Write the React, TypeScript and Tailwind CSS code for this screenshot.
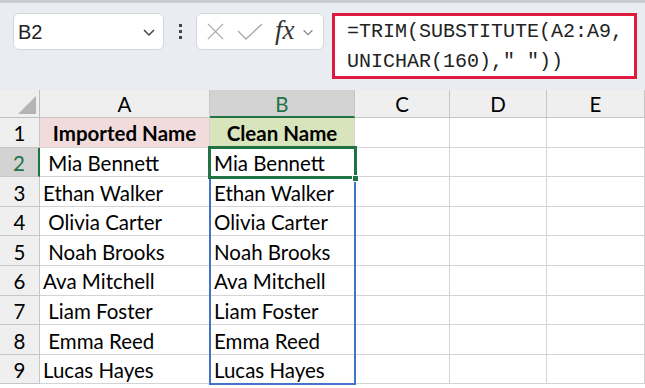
import React from "react";

const rows = [
    { a: "\u00A0Mia Bennett", b: "Mia Bennett" },
    { a: "Ethan Walker", b: "Ethan Walker" },
    { a: "\u00A0Olivia Carter", b: "Olivia Carter" },
    { a: "\u00A0Noah Brooks", b: "Noah Brooks" },
    { a: "Ava Mitchell", b: "Ava Mitchell" },
    { a: "\u00A0Liam Foster", b: "Liam Foster" },
    { a: "\u00A0Emma Reed", b: "Emma Reed" },
    { a: "Lucas Hayes", b: "Lucas Hayes" },
];

const Chevron = ({ className }: { className?: string }) => (
    <svg viewBox="0 0 16 16" className={className} fill="none" stroke="currentColor" strokeWidth="1.5">
        <path d="M3 6l5 5 5-5" />
    </svg>
);

const App = () => {
    return (
        <div className="w-[645px] h-[388px] overflow-hidden bg-white" style={{ fontFamily: "Lato, 'Open Sans', sans-serif" }}>
            {/* Toolbar with name box and formula bar */}
            <div className="h-[90px] bg-[#e9edf1] border-t-[3px] border-[#c9cdd1] flex items-start pt-[10px] pl-[13px]">
                <div className="w-[151px] h-[37px] bg-white border border-[#d3d6da] rounded-md flex items-center pl-[4px] pr-[6px] text-[20px] text-[#222]" style={{ fontFamily: "'Liberation Sans', Arial, sans-serif" }}>
                    <span className="flex-1">B2</span>
                    <Chevron className="w-[16px] h-[16px] text-[#444]" />
                </div>
                <div className="w-[32px] h-[37px] flex flex-col items-center justify-center gap-[3px]">
                    <div className="w-[3px] h-[3px] bg-[#444]" />
                    <div className="w-[3px] h-[3px] bg-[#444]" />
                    <div className="w-[3px] h-[3px] bg-[#444]" />
                </div>
                <div className="w-[128px] h-[37px] bg-white border border-[#d3d6da] rounded-md flex items-center pl-[9px] pr-[4px]">
                    <svg viewBox="0 0 20 20" className="w-[19px] h-[19px] text-[#a8a8a8]" fill="none" stroke="currentColor" strokeWidth="1.3">
                        <path d="M2 2l16 16M18 2L2 18" />
                    </svg>
                    <svg viewBox="0 0 26 18" className="w-[26px] h-[18px] ml-[12px] text-[#a8a8a8]" fill="none" stroke="currentColor" strokeWidth="1.3">
                        <path d="M1 8l8 8L25 1" />
                    </svg>
                    <span className="ml-[12px] text-[27px] italic text-[#333] leading-none -mt-[3px]" style={{ fontFamily: "'Liberation Serif', 'Times New Roman', serif" }}>fx</span>
                    <Chevron className="ml-[6px] w-[14px] h-[14px] text-[#8a8a8a]" />
                </div>
                <div className="ml-[8px] w-[305px] h-[66px] bg-white border-[3px] border-[#e0193f] pl-[12px] pt-[1px] text-[20px] leading-[30px] text-[#222]" style={{ fontFamily: "'Liberation Mono', 'DejaVu Sans Mono', monospace" }}>
                    <div>=TRIM(SUBSTITUTE(A2:A9,</div>
                    <div>UNICHAR(160)," "))</div>
                </div>
            </div>

            {/* Worksheet grid */}
            <div className="relative grid grid-cols-[40px_170px_145px_95px_97px_98px] text-[20.5px] text-black">
                {/* Column headers */}
                <div className="h-[28px] bg-[#efefef] border-r border-b border-[#bfbfbf] relative">
                    <div className="absolute right-[3px] bottom-[3px] w-0 h-0 border-l-[18px] border-l-transparent border-b-[18px] border-b-[#b4b4b4]" />
                </div>
                <div className="h-[28px] bg-[#efefef] border-r border-b border-[#c6c6c6] flex items-center justify-center pt-[2px]">A</div>
                <div className="h-[28px] bg-[#d3d3d3] border-r border-b-2 border-b-[#217346] border-r-[#c6c6c6] flex items-center justify-center text-[#217346] pt-[2px]">B</div>
                <div className="h-[28px] bg-[#efefef] border-r border-b border-[#c6c6c6] flex items-center justify-center pt-[2px]">C</div>
                <div className="h-[28px] bg-[#efefef] border-r border-b border-[#c6c6c6] flex items-center justify-center pt-[2px]">D</div>
                <div className="h-[28px] bg-[#efefef] border-r border-b border-[#c6c6c6] flex items-center justify-center pt-[2px]">E</div>

                {/* Row 1 headers */}
                <div className="h-[29.6px] bg-[#efefef] border-r border-b border-[#c6c6c6] flex items-center justify-center pt-[3px]">1</div>
                <div className="h-[29.6px] bg-[#f2dcdb] border-r border-b border-[#d4d4d4] flex items-center justify-center font-bold pt-[3px]">Imported Name</div>
                <div className="h-[29.6px] bg-[#d8e4bc] border-r border-b border-[#d4d4d4] flex items-center justify-center font-bold pt-[3px]">Clean Name</div>
                <div className="h-[29.6px] border-r border-b border-[#d4d4d4]" />
                <div className="h-[29.6px] border-r border-b border-[#d4d4d4]" />
                <div className="h-[29.6px] border-r border-b border-[#d4d4d4]" />

                {rows.map((r, i) => (
                    <React.Fragment key={i}>
                        <div className={i === 0
                            ? "h-[29.6px] bg-[#d3d3d3] border-r-2 border-r-[#217346] border-b border-b-[#c6c6c6] flex items-center justify-center text-[#217346] pt-[3px]"
                            : "h-[29.6px] bg-[#efefef] border-r border-b border-[#c6c6c6] flex items-center justify-center pt-[3px]"}>
                            {i + 2}
                        </div>
                        <div className="h-[29.6px] border-r border-b border-[#d4d4d4] flex items-center pl-[3px] pt-[3px] whitespace-pre">{r.a}</div>
                        <div className="h-[29.6px] border-r border-b border-[#d4d4d4] flex items-center pl-[4px] pt-[3px] whitespace-pre">{r.b}</div>
                        <div className="h-[29.6px] border-r border-b border-[#d4d4d4]" />
                        <div className="h-[29.6px] border-r border-b border-[#d4d4d4]" />
                        <div className="h-[29.6px] border-r border-b border-[#d4d4d4]" />
                    </React.Fragment>
                ))}

                {/* Selected range B2:B9 */}
                <div className="absolute left-[209px] top-[57px] w-[147px] h-[238px] border-2 border-[#4472c4] pointer-events-none" />
                {/* Active cell B2 */}
                <div className="absolute left-[208px] top-[56px] w-[149px] h-[33px] border-[3px] border-[#217346] pointer-events-none" />
                <div className="absolute left-[352px] top-[85px] w-[7px] h-[7px] bg-[#217346] border border-white" />
            </div>
        </div>
    );
};

export default App;
